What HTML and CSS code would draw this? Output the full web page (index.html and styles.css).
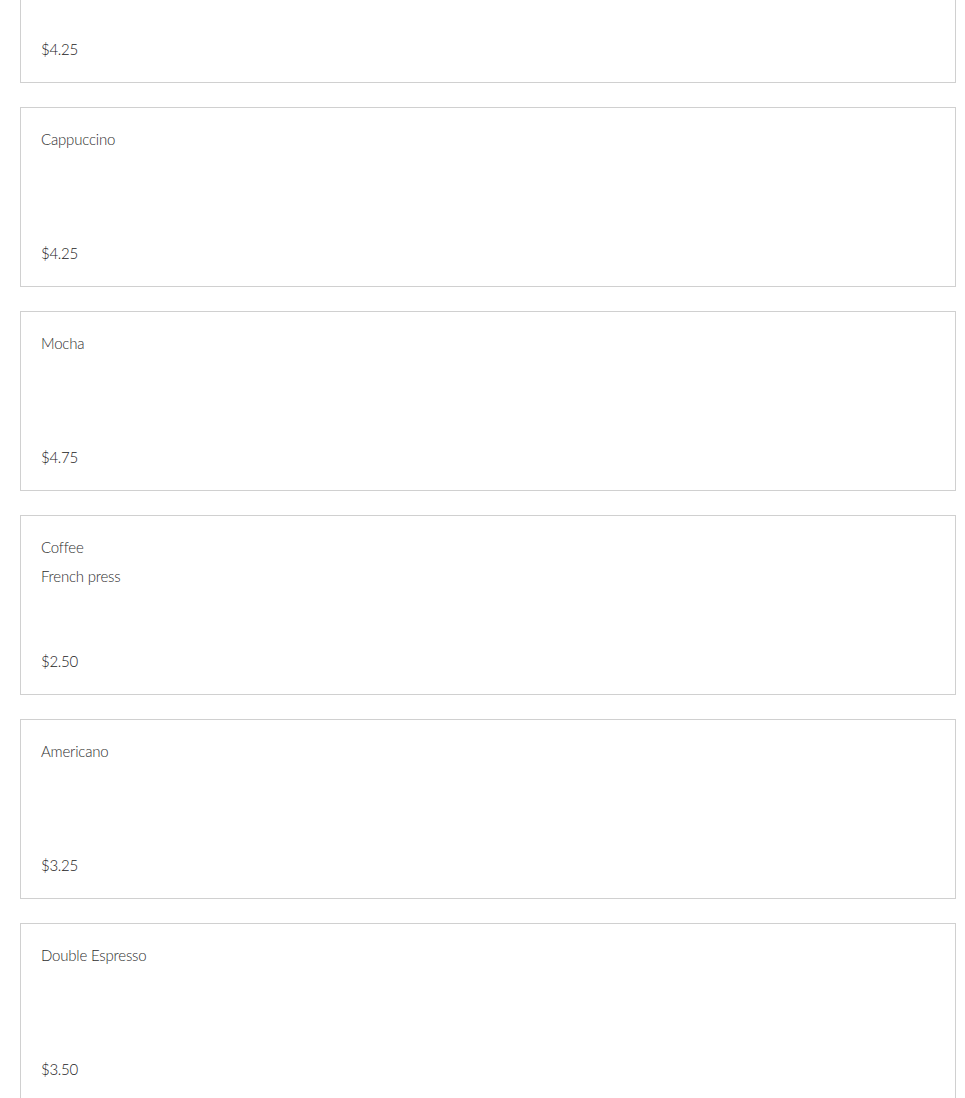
FILE: index.html
```html
<!DOCTYPE html>
<html>
<head>
<meta charset="utf-8">
<link rel="stylesheet" href="styles.css">
</head>
<body>
<div class="menu">
  <div class="item">
    <div class="price">$4.25</div>
  </div>
  <div class="item">
    <div class="name">Cappuccino</div>
    <div class="price">$4.25</div>
  </div>
  <div class="item">
    <div class="name">Mocha</div>
    <div class="price">$4.75</div>
  </div>
  <div class="item">
    <div class="name">Coffee</div>
    <div class="desc">French press</div>
    <div class="price">$2.50</div>
  </div>
  <div class="item">
    <div class="name">Americano</div>
    <div class="price">$3.25</div>
  </div>
  <div class="item">
    <div class="name">Double Espresso</div>
    <div class="price">$3.50</div>
  </div>
</div>
</body>
</html>
```
FILE: styles.css
```css
html, body {
  margin: 0;
  padding: 0;
  background: #fff;
}
body {
  font-family: Lato, "Liberation Sans", sans-serif;
  color: #333;
  overflow: hidden;
}
.menu {
  display: flex;
  flex-direction: column;
  gap: 24px;
  width: 936px;
  margin: -97px 0 0 20px;
}
.item {
  box-sizing: border-box;
  height: 180px;
  border: 1px solid #d0d0d0;
  padding: 20px 20px 22px;
  display: flex;
  flex-direction: column;
}
.name, .desc {
  font-size: 15px;
  font-weight: 300;
  line-height: 22px;
  letter-spacing: -0.2px;
  color: #2e2e2e;
}
.desc {
  margin-top: 7px;
}
.price {
  margin-top: auto;
  font-size: 15px;
  font-weight: 300;
  line-height: 22px;
  letter-spacing: -0.3px;
  color: #222;
}
```
